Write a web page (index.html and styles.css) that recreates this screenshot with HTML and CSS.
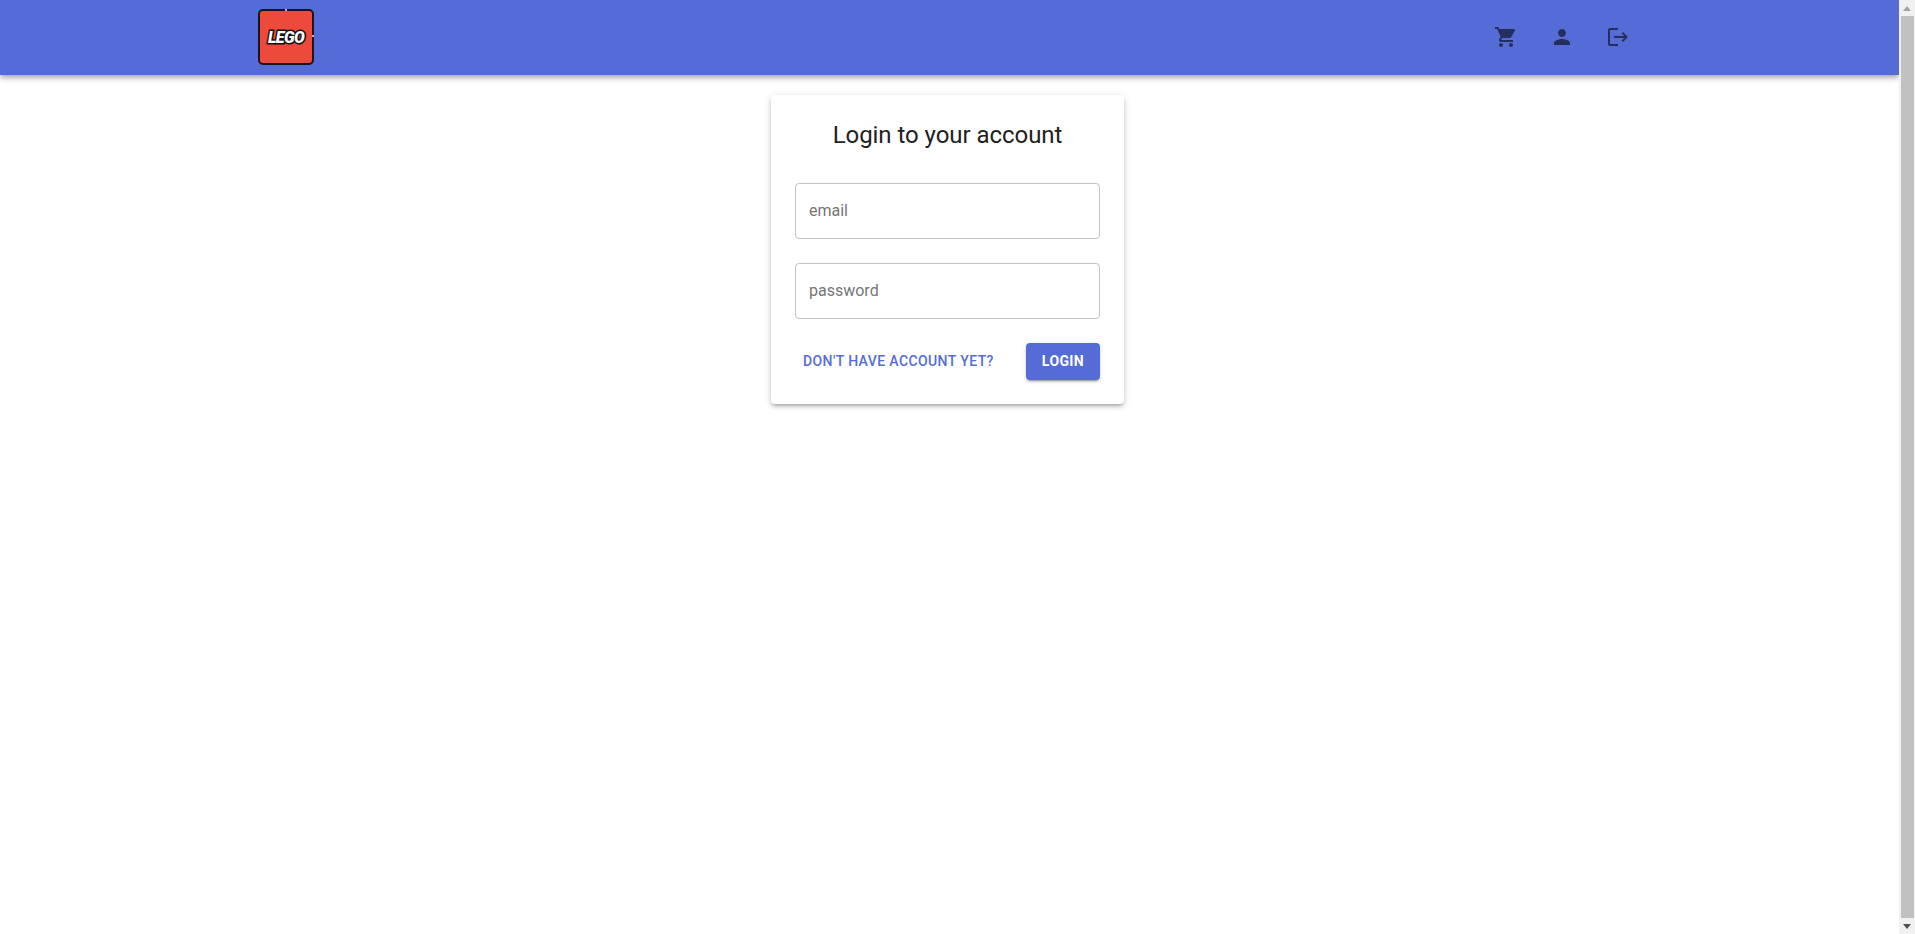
FILE: index.html
```html
<!DOCTYPE html>
<html lang="en">
<head>
    <meta charset="UTF-8">
    <meta name="viewport" content="width=device-width, initial-scale=1.0">
    <title>Login</title>
    <link rel="stylesheet" href="styles.css">
</head>
<body>
    <div class="page">
        <header class="app-bar">
            <a class="logo" href="#">
                <span class="logo-word">LEGO</span>
            </a>
            <nav class="app-actions">
                <button class="icon-button" type="button" aria-label="Cart">
                    <svg xmlns="http://www.w3.org/2000/svg" width="24" height="24" fill="currentColor" viewBox="0 0 24 24">
                        <path d="M7 18c-1.1 0-1.99.9-1.99 2S5.9 22 7 22s2-.9 2-2-.9-2-2-2zM1 2v2h2l3.6 7.59-1.35 2.45c-.16.28-.25.61-.25.96 0 1.1.9 2 2 2h12v-2H7.42c-.14 0-.25-.11-.25-.25l.03-.12.9-1.63h7.45c.75 0 1.41-.41 1.75-1.03l3.58-6.49c.08-.14.12-.31.12-.48 0-.55-.45-1-1-1H5.21l-.94-2H1zm16 16c-1.1 0-1.99.9-1.99 2s.89 2 1.99 2 2-.9 2-2-.9-2-2-2z"/>
                    </svg>
                </button>
                <button class="icon-button" type="button" aria-label="Profile">
                    <svg xmlns="http://www.w3.org/2000/svg" width="24" height="24" fill="currentColor" viewBox="0 0 24 24">
                        <path d="M12 12c2.21 0 4-1.79 4-4s-1.79-4-4-4-4 1.79-4 4 1.79 4 4 4zm0 2c-2.67 0-8 1.34-8 4v2h16v-2c0-2.66-5.33-4-8-4z"/>
                    </svg>
                </button>
                <button class="icon-button" type="button" aria-label="Log out">
                    <svg xmlns="http://www.w3.org/2000/svg" width="24" height="24" fill="currentColor" viewBox="0 0 24 24">
                        <path d="M17 7l-1.41 1.41L18.17 11H8v2h10.17l-2.58 2.58L17 17l5-5zM4 5h8V3H4c-1.1 0-2 .9-2 2v14c0 1.1.9 2 2 2h8v-2H4V5z"/>
                    </svg>
                </button>
            </nav>
        </header>

        <main class="content">
            <form class="login-card">
                <h1 class="login-title">Login to your account</h1>
                <input class="field" type="text" placeholder="email">
                <input class="field" type="password" placeholder="password">
                <div class="login-actions">
                    <button class="text-button" type="button">Don't have account yet?</button>
                    <button class="login-button" type="submit">Login</button>
                </div>
            </form>
        </main>
    </div>

    <div class="scrollbar">
        <span class="arrow arrow-up"></span>
        <div class="thumb"></div>
        <span class="arrow arrow-down"></span>
    </div>
</body>
</html>
```

FILE: styles.css
```css
* {
    margin: 0;
    padding: 0;
    box-sizing: border-box;
    font-family: Roboto, "Liberation Sans", sans-serif;
}

body {
    display: flex;
    height: 100vh;
    overflow: hidden;
    background-color: white;
}

.page {
    flex: 1;
    min-width: 0;
}

.app-bar {
    height: 75px;
    padding: 0 253px 1px 258px;
    display: flex;
    justify-content: space-between;
    align-items: center;
    background-color: #556cd6;
    box-shadow: 0 2px 4px -1px rgba(0, 0, 0, 0.2), 0 4px 5px 0 rgba(0, 0, 0, 0.14), 0 1px 10px 0 rgba(0, 0, 0, 0.12);
}

.logo {
    position: relative;
    width: 56px;
    height: 56px;
    display: flex;
    align-items: center;
    justify-content: center;
    background-color: #ee4a3c;
    border: 2px solid #1b1420;
    border-radius: 5px;
    text-decoration: none;
}

/* little nicks in the logo's edge */
.logo::before,
.logo::after {
    content: "";
    position: absolute;
    background-color: #e8a0a8;
}

.logo::before {
    top: -2px;
    left: 25px;
    width: 2px;
    height: 2px;
}

.logo::after {
    top: 24px;
    right: -2px;
    width: 2px;
    height: 2px;
}

.logo-word {
    font-family: Roboto, sans-serif;
    font-size: 16px;
    font-weight: 900;
    font-style: italic;
    letter-spacing: -0.6px;
    color: white;
    -webkit-text-stroke: 3px #111;
    paint-order: stroke fill;
}

.app-actions {
    display: flex;
}

.icon-button {
    display: flex;
    padding: 16px;
    border: none;
    background: none;
    color: rgba(0, 0, 0, 0.56);
    cursor: pointer;
}

.content {
    display: flex;
    justify-content: center;
    padding: 20px 4px 0 0;
}

.login-card {
    width: 353px;
    height: 309px;
    padding: 24px;
    display: flex;
    flex-direction: column;
    background-color: white;
    border-radius: 4px;
    box-shadow: 0 3px 3px -2px rgba(0, 0, 0, 0.2), 0 3px 4px 0 rgba(0, 0, 0, 0.14), 0 1px 8px 0 rgba(0, 0, 0, 0.12);
}

.login-title {
    font-size: 24px;
    font-weight: 400;
    line-height: 32px;
    letter-spacing: -0.05px;
    color: #212121;
    text-align: center;
    margin-bottom: 32px;
}

.field {
    width: 100%;
    height: 56px;
    padding: 0 13px 1px;
    margin-bottom: 24px;
    border: 1px solid #c4c4c4;
    border-radius: 4px;
    outline: none;
    font-size: 16px;
    color: #212121;
}

.field::placeholder {
    color: #757575;
    opacity: 1;
}

.login-actions {
    display: flex;
    justify-content: space-between;
    align-items: center;
}

.text-button {
    height: 37px;
    padding: 0 8px 2px;
    border: none;
    background: none;
    font-size: 14px;
    font-weight: 500;
    letter-spacing: 0.4px;
    text-transform: uppercase;
    color: #556cd6;
    cursor: pointer;
}

.login-button {
    width: 74px;
    height: 37px;
    padding-bottom: 2px;
    border: none;
    border-radius: 4px;
    background-color: #556cd6;
    font-size: 14px;
    font-weight: 700;
    letter-spacing: 0.4px;
    text-transform: uppercase;
    color: white;
    box-shadow: 0 3px 1px -2px rgba(0, 0, 0, 0.2), 0 2px 2px 0 rgba(0, 0, 0, 0.14), 0 1px 5px 0 rgba(0, 0, 0, 0.12);
    cursor: pointer;
}

/* fake window scrollbar, the screenshot has one */
.scrollbar {
    width: 16px;
    display: flex;
    flex-direction: column;
    align-items: center;
    background-color: #f1f1f1;
}

.thumb {
    flex: 1;
    width: 13px;
    margin-left: 1px;
    background-color: #c1c1c1;
}

.arrow {
    width: 0;
    height: 0;
    margin: 6px 0 5px;
    border-left: 4px solid transparent;
    border-right: 4px solid transparent;
}

.arrow-up {
    border-bottom: 5px solid #a3a3a3;
}

.arrow-down {
    border-top: 5px solid #505050;
}
```
